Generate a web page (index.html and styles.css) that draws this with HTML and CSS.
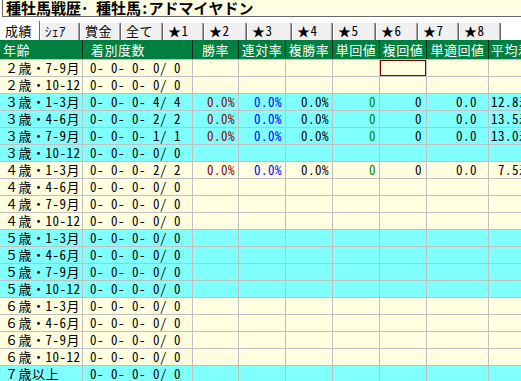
FILE: index.html
```html
<!DOCTYPE html>
<html lang="ja">
<head>
<meta charset="utf-8">
<title>種牡馬戦歴</title>
<link rel="stylesheet" href="styles.css">
</head>
<body>
<div class="title">種牡馬戦歴･ 種牡馬:アドマイヤドン</div>
<div class="tabs">
  <div class="tab sel w40">成績</div>
  <div class="tab w40">ｼｪｱ</div>
  <div class="tab w41">賞金</div>
  <div class="tab w42">全て</div>
  <div class="tab w41">★1</div>
  <div class="tab w43">★2</div>
  <div class="tab w45">★3</div>
  <div class="tab w41">★4</div>
  <div class="tab w43">★5</div>
  <div class="tab w42">★6</div>
  <div class="tab w41">★7</div>
  <div class="tab w42">★8</div>
</div>
<div class="grid">
  <div class="row head">
    <div class="c c1">年齢</div><div class="c c2">着別度数</div><div class="c c3">勝率</div><div class="c c4">連対率</div><div class="c c5">複勝率</div><div class="c c6">単回値</div><div class="c c7">複回値</div><div class="c c8">単適回値</div><div class="c c9">平均着順</div>
  </div>
  <div class="row y"><div class="c c1">２歳・7-9月</div><div class="c c2">0- 0- 0- 0/ 0</div><div class="c c3"></div><div class="c c4"></div><div class="c c5"></div><div class="c c6"></div><div class="c c7 cur"></div><div class="c c8"></div><div class="c c9"></div></div>
  <div class="row y"><div class="c c1">２歳・10-12</div><div class="c c2">0- 0- 0- 0/ 0</div><div class="c c3"></div><div class="c c4"></div><div class="c c5"></div><div class="c c6"></div><div class="c c7"></div><div class="c c8"></div><div class="c c9"></div></div>
  <div class="row b"><div class="c c1">３歳・1-3月</div><div class="c c2">0- 0- 0- 4/ 4</div><div class="c c3">0.0%</div><div class="c c4">0.0%</div><div class="c c5">0.0%</div><div class="c c6">0</div><div class="c c7">0</div><div class="c c8">0.0</div><div class="c c9">12.8着</div></div>
  <div class="row b"><div class="c c1">３歳・4-6月</div><div class="c c2">0- 0- 0- 2/ 2</div><div class="c c3">0.0%</div><div class="c c4">0.0%</div><div class="c c5">0.0%</div><div class="c c6">0</div><div class="c c7">0</div><div class="c c8">0.0</div><div class="c c9">13.5着</div></div>
  <div class="row b"><div class="c c1">３歳・7-9月</div><div class="c c2">0- 0- 0- 1/ 1</div><div class="c c3">0.0%</div><div class="c c4">0.0%</div><div class="c c5">0.0%</div><div class="c c6">0</div><div class="c c7">0</div><div class="c c8">0.0</div><div class="c c9">13.0着</div></div>
  <div class="row b"><div class="c c1">３歳・10-12</div><div class="c c2">0- 0- 0- 0/ 0</div><div class="c c3"></div><div class="c c4"></div><div class="c c5"></div><div class="c c6"></div><div class="c c7"></div><div class="c c8"></div><div class="c c9"></div></div>
  <div class="row y"><div class="c c1">４歳・1-3月</div><div class="c c2">0- 0- 0- 2/ 2</div><div class="c c3">0.0%</div><div class="c c4">0.0%</div><div class="c c5">0.0%</div><div class="c c6">0</div><div class="c c7">0</div><div class="c c8">0.0</div><div class="c c9"> 7.5着</div></div>
  <div class="row y"><div class="c c1">４歳・4-6月</div><div class="c c2">0- 0- 0- 0/ 0</div><div class="c c3"></div><div class="c c4"></div><div class="c c5"></div><div class="c c6"></div><div class="c c7"></div><div class="c c8"></div><div class="c c9"></div></div>
  <div class="row y"><div class="c c1">４歳・7-9月</div><div class="c c2">0- 0- 0- 0/ 0</div><div class="c c3"></div><div class="c c4"></div><div class="c c5"></div><div class="c c6"></div><div class="c c7"></div><div class="c c8"></div><div class="c c9"></div></div>
  <div class="row y"><div class="c c1">４歳・10-12</div><div class="c c2">0- 0- 0- 0/ 0</div><div class="c c3"></div><div class="c c4"></div><div class="c c5"></div><div class="c c6"></div><div class="c c7"></div><div class="c c8"></div><div class="c c9"></div></div>
  <div class="row b"><div class="c c1">５歳・1-3月</div><div class="c c2">0- 0- 0- 0/ 0</div><div class="c c3"></div><div class="c c4"></div><div class="c c5"></div><div class="c c6"></div><div class="c c7"></div><div class="c c8"></div><div class="c c9"></div></div>
  <div class="row b"><div class="c c1">５歳・4-6月</div><div class="c c2">0- 0- 0- 0/ 0</div><div class="c c3"></div><div class="c c4"></div><div class="c c5"></div><div class="c c6"></div><div class="c c7"></div><div class="c c8"></div><div class="c c9"></div></div>
  <div class="row b"><div class="c c1">５歳・7-9月</div><div class="c c2">0- 0- 0- 0/ 0</div><div class="c c3"></div><div class="c c4"></div><div class="c c5"></div><div class="c c6"></div><div class="c c7"></div><div class="c c8"></div><div class="c c9"></div></div>
  <div class="row b"><div class="c c1">５歳・10-12</div><div class="c c2">0- 0- 0- 0/ 0</div><div class="c c3"></div><div class="c c4"></div><div class="c c5"></div><div class="c c6"></div><div class="c c7"></div><div class="c c8"></div><div class="c c9"></div></div>
  <div class="row y"><div class="c c1">６歳・1-3月</div><div class="c c2">0- 0- 0- 0/ 0</div><div class="c c3"></div><div class="c c4"></div><div class="c c5"></div><div class="c c6"></div><div class="c c7"></div><div class="c c8"></div><div class="c c9"></div></div>
  <div class="row y"><div class="c c1">６歳・4-6月</div><div class="c c2">0- 0- 0- 0/ 0</div><div class="c c3"></div><div class="c c4"></div><div class="c c5"></div><div class="c c6"></div><div class="c c7"></div><div class="c c8"></div><div class="c c9"></div></div>
  <div class="row y"><div class="c c1">６歳・7-9月</div><div class="c c2">0- 0- 0- 0/ 0</div><div class="c c3"></div><div class="c c4"></div><div class="c c5"></div><div class="c c6"></div><div class="c c7"></div><div class="c c8"></div><div class="c c9"></div></div>
  <div class="row y"><div class="c c1">６歳・10-12</div><div class="c c2">0- 0- 0- 0/ 0</div><div class="c c3"></div><div class="c c4"></div><div class="c c5"></div><div class="c c6"></div><div class="c c7"></div><div class="c c8"></div><div class="c c9"></div></div>
  <div class="row b"><div class="c c1">７歳以上</div><div class="c c2">0- 0- 0- 0/ 0</div><div class="c c3"></div><div class="c c4"></div><div class="c c5"></div><div class="c c6"></div><div class="c c7"></div><div class="c c8"></div><div class="c c9"></div></div>
</div>
</body>
</html>
```
FILE: styles.css
```css
html, body {
  margin: 0;
  padding: 0;
  width: 521px;
  height: 381px;
  overflow: hidden;
  background: #ffffff;
  font-family: "Noto Sans Mono CJK JP", "Noto Sans CJK JP", monospace;
  font-size: 13px;
  letter-spacing: 0.5px;
  color: #000;
}

.title {
  box-sizing: border-box;
  height: 17px;
  margin-left: 2px;
  padding-left: 3px;
  border-left: 1px solid #696969;
  border-bottom: 1px solid #696969;
  background: #fffde2;
  font-size: 15px;
  letter-spacing: 0;
  font-weight: bold;
  line-height: 16px;
  white-space: pre;
}

.tabs {
  display: flex;
  height: 23px;
  box-sizing: border-box;
  padding-top: 5px;
  background: #ffffff;
}

.tab {
  box-sizing: border-box;
  height: 18px;
  padding-left: 4px;
  line-height: 16px;
  white-space: pre;
  background: #f0f0f0;
  border-top: 1px solid #ffffff;
  border-left: 1px solid #ffffff;
  border-right: 1px solid #696969;
  box-shadow: inset -1px 0 0 #a0a0a0;
  border-radius: 2px 2px 0 0;
}

.tab.sel {
  background: #ffffff;
  box-shadow: none;
  margin-top: -2px;
  height: 20px;
  padding-top: 2px;
}

.w40 { width: 40px; }
.w41 { width: 41px; }
.w42 { width: 42px; }
.w43 { width: 43px; }
.w45 { width: 45px; }

.grid {
  width: 560px;
}

.row {
  display: flex;
  box-sizing: border-box;
  height: 17px;
  border-top: 1px solid #c0c0c0;
}

.row.head {
  height: 19px;
  border-top: none;
  background: #008040;
  color: #ffffff;
}

.row.y { background: #ffffe0; }
.row.b { background: #80ffff; }

.c {
  box-sizing: border-box;
  flex: none;
  height: 100%;
  line-height: 16px;
  white-space: pre;
  border-left: 1px solid #c0c0c0;
  text-align: right;
  padding-right: 3px;
}

.head .c {
  border-left-color: #1c2a1c;
  line-height: 19px;
  text-align: center;
  padding: 0;
}

.c1 { width: 82px; border-left: none; text-align: left; padding-left: 5px; }
.c2 { width: 110px; text-align: left; padding-left: 7px; }
.c3 { width: 46px; color: #800000; }
.c4 { width: 47px; color: #0000ff; }
.c5 { width: 47px; }
.c6 { width: 47px; color: #008000; }
.c7 { width: 47px; padding-right: 4px; }
.c8 { width: 62px; padding-right: 11px; }
.c9 { width: 72px; text-align: left; padding-left: 2px; }

.head .c1 { text-align: left; padding-left: 3px; border-left: none; }
.head .c2 { text-align: left; padding-left: 8px; }
.head .c9 { text-align: left; padding-left: 2px; }
.head .c3, .head .c4, .head .c5, .head .c6, .head .c7, .head .c8 { color: #ffffff; }

.cur {
  box-shadow: inset 0 0 0 1px #800000;
}
```
